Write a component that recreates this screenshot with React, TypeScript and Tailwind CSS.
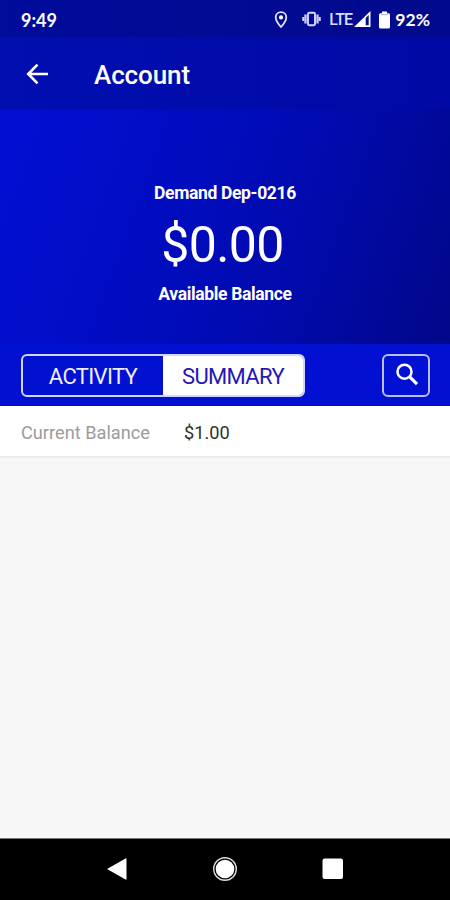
import React, { useState } from 'react';

type Tab = 'activity' | 'summary';

function StatusBar() {
  return (
    <div className="flex h-[37px] shrink-0 items-center bg-linear-to-r from-[#010c9b] to-[#010a8c] pl-[21px] pr-5 pt-[2px] font-['Lato',sans-serif] font-bold">
      <span className="flex-1 text-[18px] leading-5">9:49</span>

      {/* Location */}
      <svg className="mr-[14px] h-[18px] w-[14px]" viewBox="0 0 14 18" fill="none">
        <path d="M7 1.200C3.900 1.200 1.700 3.500 1.700 6.400C1.700 9.900 7 16 7 16S12.300 9.900 12.300 6.400C12.300 3.500 10.100 1.200 7 1.200Z" stroke="#dfe1ff" strokeWidth="1.800" />
        <circle cx="7" cy="6.400" r="2.100" fill="#fff" />
      </svg>

      {/* Vibrate */}
      <svg className="mr-[8px] mb-[2px] h-[16px] w-[19px]" viewBox="0 0 19 16" fill="none">
        <rect x="6" y="1.800" width="7" height="12.400" rx="1.200" stroke="#d5d8ff" strokeWidth="1.900" />
        <path d="M3.500 3.500V12.500M15.500 3.500V12.500" stroke="#c5c8fa" strokeWidth="2.400" />
        <path d="M1.300 6V10M17.700 6V10" stroke="#d5d8ff" strokeWidth="2" />
      </svg>

      <span className="w-[25px] text-[16px] font-medium leading-5 tracking-[-0.9px] text-[#d9dbff] font-['Roboto',sans-serif]">LTE</span>

      {/* Signal */}
      <svg className="mr-[8px] h-[17px] w-[17px]" viewBox="0 0 17 17">
        <path d="M0 16L16.500 0V16H0Z" fill="#fff" />
        <path d="M11.700 7L14.700 4V14.300H11.700Z" fill="#010a8c" />
      </svg>

      {/* Battery */}
      <svg className="mr-[5px] h-[18px] w-[11px]" viewBox="0 0 11 18">
        <path d="M3 0.500H8V2.200H9.500Q11 2.200 11 3.700V16Q11 17.500 9.500 17.500H1.500Q0 17.500 0 16V3.700Q0 2.200 1.500 2.200H3Z" fill="#fff" />
        <path d="M2 3.700H9" stroke="#a9adf0" strokeWidth="1" />
      </svg>

      <span className="text-[17.500px] leading-5">92%</span>
    </div>
  );
}

function AppBar() {
  return (
    <header className="flex h-[72px] shrink-0 items-center bg-linear-to-r from-[#020eb0] to-[#0109a5] pl-[25px]">
      <button aria-label="Back" className="mt-[2px]">
        <svg className="h-[22px] w-[23px]" viewBox="0 0 23 22" fill="none" stroke="#fff" strokeWidth="2.600">
          <path d="M12.500 1.700L3.200 11L12.500 20.300M3.200 11H23" />
        </svg>
      </button>
      <h1 className="ml-[46px] mt-[3px] text-[26px] font-medium leading-8 tracking-[-0.1px]">Account</h1>
    </header>
  );
}

function BalancePanel() {
  return (
    <section className="flex h-[235px] shrink-0 flex-col items-center bg-[linear-gradient(110deg,#020fd4_0%,#010cbc_45%,#010aa8_70%,#010788_100%)] pt-[72px]">
      <p className="text-[17.500px] font-bold leading-6 tracking-[-0.35px]">Demand Dep-0216</p>
      <p className="mr-[5px] mt-[11px] text-[50px] leading-[58px] tracking-[-0.6px]">$0.00</p>
      <p className="mt-[8px] text-[17.500px] font-bold leading-6 tracking-[-0.35px]">Available Balance</p>
    </section>
  );
}

export default function App() {
  const [tab, setTab] = useState<Tab>('summary');

  const tabClass = (name: Tab) =>
    tab === name ? 'bg-white text-[#2418b5]' : 'text-[#eeeeff]';

  return (
    <div className="flex h-[900px] w-[450px] flex-col overflow-hidden bg-[#f7f7f7] text-white font-['Roboto',sans-serif]">
      <StatusBar />
      <AppBar />
      <BalancePanel />

      {/* Tabs + search */}
      <div className="flex h-[62px] shrink-0 items-center justify-between bg-[#0210d2] pl-[21px] pr-5">
        <div className="flex h-[43px] w-[284px] overflow-hidden rounded-[6px] border-2 border-[#d3d5ff] bg-[#0210d2] text-[22px] tracking-[-0.65px]">
          <button onClick={() => setTab('activity')} className={`w-[140px] pt-[3px] ${tabClass('activity')}`}>
            ACTIVITY
          </button>
          <button onClick={() => setTab('summary')} className={`flex-1 pt-[3px] ${tabClass('summary')}`}>
            SUMMARY
          </button>
        </div>
        <button aria-label="Search" className="flex h-[43px] w-[48px] items-center justify-center rounded-[6px] border-2 border-[#b9bcff]">
          <svg className="ml-px h-[24px] w-[24px]" viewBox="0 0 24 24" fill="none" stroke="#fff">
            <circle cx="9.500" cy="8.700" r="7" strokeWidth="2.500" />
            <path d="M14.500 13.700L22 21.200" strokeWidth="3.200" />
          </svg>
        </button>
      </div>

      <div className="flex h-[52px] shrink-0 items-center border-b-2 border-[#ececec] bg-white pl-[21px] pt-[3px] text-[18.200px]">
        <span className="w-[163px] text-[#9b9b9b]">Current Balance</span>
        <span className="text-[#303030]">$1.00</span>
      </div>

      <div className="flex-1" />

      {/* System navigation */}
      <nav className="flex h-[62px] shrink-0 items-center justify-center gap-[82px] border-t border-[#777] bg-black pb-[2px]">
        <svg className="h-[26px] w-[26px]" viewBox="0 0 26 26">
          <path d="M3 13L21.500 2.500Q22.500 2 22.500 3V23Q22.500 24 21.500 23.500Z" fill="#fff" />
        </svg>
        <svg className="h-[26px] w-[26px]" viewBox="0 0 26 26">
          <circle cx="13" cy="13" r="11.300" fill="none" stroke="#ddd" strokeWidth="1.400" />
          <circle cx="13" cy="13" r="9.300" fill="#fff" />
        </svg>
        <svg className="h-[26px] w-[26px]" viewBox="0 0 26 26">
          <rect x="2.500" y="2.500" width="20.500" height="20.500" rx="2" fill="#fff" />
        </svg>
      </nav>
    </div>
  );
}
